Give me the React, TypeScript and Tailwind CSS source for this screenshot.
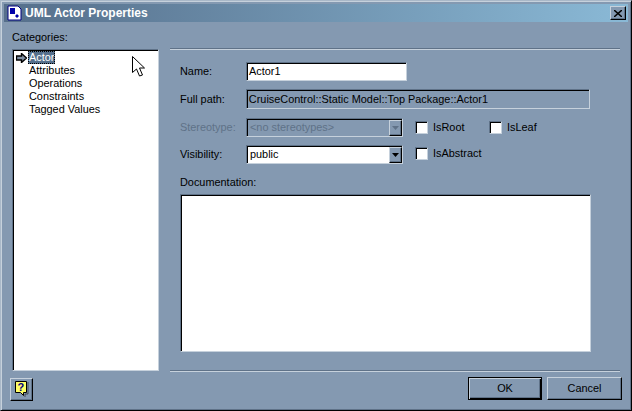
const sunken =
  "border border-t-[#5f7288] border-l-[#5f7288] border-r-[#c6d1dc] border-b-[#c6d1dc] shadow-[inset_1px_1px_0_#000]";
const raised =
  "bg-[#8499b1] border border-t-[#c6d1dc] border-l-[#c6d1dc] border-r-[#000] border-b-[#000] shadow-[inset_-1px_-1px_0_#5f7288]";

function ComboArrow({ disabled }: { disabled?: boolean }) {
  return (
    <div className={`w-[13px] h-[16px] flex items-center justify-center ${raised}`}>
      <svg width="7" height="4" viewBox="0 0 7 4">
        <path d="M0 0h7L3.5 4z" fill={disabled ? "#5f7288" : "#000"} />
      </svg>
    </div>
  );
}

function Check({ label }: { label: string }) {
  return (
    <div className="flex items-center gap-[5px]">
      <div className={`w-[13px] h-[13px] bg-white ${sunken}`} />
      <span>{label}</span>
    </div>
  );
}

function Divider() {
  return <div className="h-[2px] border-t border-t-[#5f7288] border-b border-b-[#c6d1dc]" />;
}

export default function App() {
  return (
    <div
      className="relative w-[632px] h-[411px] bg-[#8499b1] text-black text-[10.9px] leading-[13px] overflow-hidden flex flex-col border border-t-[#a9b8c8] border-l-[#a9b8c8] border-r-[#000] border-b-[#000] p-[3px] shadow-[inset_1px_1px_0_#c6d1dc,inset_-1px_-1px_0_#5f7288]"
      style={{ fontFamily: '"Liberation Sans", Arial, sans-serif' }}
    >
      {/* Barra de título */}
      <div className="h-[18px] flex items-center bg-gradient-to-r from-[#566f8b] to-[#8ab9d6] pl-[2px] pr-[2px] shrink-0">
        <svg width="16" height="16" viewBox="0 0 16 16" className="shrink-0">
          <path d="M2 1h10l3 3v11H2z" fill="#fff" stroke="#000080" />
          <path d="M4 3h5v6H4z" fill="#0000a8" />
          <path d="M11 9l2 2-2 2-2-2z" fill="#0000a8" />
        </svg>
        <span className="ml-[3px] text-white font-bold text-[12px]">UML Actor Properties</span>
        <div className={`ml-auto w-[16px] h-[14px] flex items-center justify-center ${raised}`}>
          <svg width="8" height="7" viewBox="0 0 8 7">
            <path d="M0 0l8 7M8 0L0 7" stroke="#000" strokeWidth="1.5" />
          </svg>
        </div>
      </div>

      {/* Conteúdo */}
      <div className="flex flex-1 pl-[8px] pr-[8px]">
        {/* Categorias */}
        <div className="w-[147px] shrink-0 flex flex-col">
          <div className="mt-[9px] h-[13px]">Categories:</div>
          <div className={`relative mt-[5px] h-[322px] bg-white pl-[3px] pt-[1px] ${sunken}`}>
            <div className="flex items-center h-[13px]">
              <svg width="11" height="10" viewBox="0 0 11 10" className="shrink-0">
                <path d="M.5 3h5V.5L10.5 5l-5 4.500V7h-5z" fill="#7f8fa3" stroke="#000" strokeWidth="1.4" />
              </svg>
              <span className="ml-[1px] px-[1px] text-white bg-[#56708c] outline-1 outline-dotted outline-black -outline-offset-1">
                Actor
              </span>
            </div>
            <div className="pl-[13px]">
              <div className="h-[13px]">Attributes</div>
              <div className="h-[13px]">Operations</div>
              <div className="h-[13px]">Constraints</div>
              <div className="h-[13px]">Tagged Values</div>
            </div>
            {/* Ponteiro do mouse */}
            <svg width="15" height="22" viewBox="0 0 15 22" className="absolute left-[119px] top-[6px]">
              <path d="M.5.5v16l4-3.500 3 7 3-1-3-7h5z" fill="#fff" stroke="#000" />
            </svg>
          </div>
        </div>

        {/* Painel direito */}
        <div className="ml-[11px] w-[450px] shrink-0 flex flex-col">
          <div className="mt-[26px]">
            <Divider />
          </div>
          <div className="pl-[10px] pr-[30px]">
            <div className="mt-[12px] flex items-center h-[19px]">
              <span className="w-[66px]">Name:</span>
              <div className={`w-[161px] h-[19px] bg-white pl-[2px] flex items-center ${sunken}`}>Actor1</div>
            </div>
            <div className="mt-[8px] flex items-center h-[20px]">
              <span className="w-[66px]">Full path:</span>
              <div className={`w-[345px] h-[20px] pl-[2px] flex items-center ${sunken}`}>
                CruiseControl::Static Model::Top Package::Actor1
              </div>
            </div>
            <div className="mt-[9px] flex items-center h-[19px]">
              <span className="w-[66px] text-[#5f7288]">Stereotype:</span>
              <div className={`w-[157px] h-[19px] pl-[3px] flex items-center justify-between text-[#5f7288] ${sunken}`}>
                &lt;no stereotypes&gt;
                <ComboArrow disabled />
              </div>
              <div className="ml-[12px] w-[74px]">
                <Check label="IsRoot" />
              </div>
              <Check label="IsLeaf" />
            </div>
            <div className="mt-[8px] flex items-center h-[19px]">
              <span className="w-[66px]">Visibility:</span>
              <div className={`w-[157px] h-[19px] bg-white pl-[3px] flex items-center justify-between ${sunken}`}>
                public
                <ComboArrow />
              </div>
              <div className="ml-[12px] -mt-[2px]">
                <Check label="IsAbstract" />
              </div>
            </div>
            <div className="mt-[12px] h-[13px]">Documentation:</div>
            <div className={`mt-[5px] w-[411px] h-[158px] bg-white ${sunken}`} />
          </div>
          <div className="mt-[18px]">
            <Divider />
          </div>
        </div>
      </div>

      {/* Rodapé */}
      <div className="h-[24px] mb-[6px] pl-[6px] pr-[6px] flex items-center shrink-0">
        <div className={`w-[23px] h-[23px] flex items-center justify-center ${raised}`}>
          <svg width="15" height="18" viewBox="0 0 15 18">
            <path d="M1.500 1.500h11v11h-3v3l-3-3h-5z" fill="#ffff66" stroke="#000" />
            <path d="M14 2v12h-3v3" fill="none" stroke="#000" strokeOpacity=".5" />
            <text x="3.500" y="11" fontSize="11" fontWeight="700" fill="#000080" fontFamily="Liberation Sans">?</text>
          </svg>
        </div>
        <div className="ml-auto flex gap-[5px] mt-[-1px]">
          <div className="w-[74px] h-[23px] flex items-center justify-center bg-[#8499b1] border border-black shadow-[inset_1px_1px_0_#c6d1dc,inset_-1px_-1px_0_#000,inset_-2px_-2px_0_#5f7288]">
            OK
          </div>
          <div className={`w-[75px] h-[23px] flex items-center justify-center ${raised}`}>Cancel</div>
        </div>
      </div>
    </div>
  );
}
